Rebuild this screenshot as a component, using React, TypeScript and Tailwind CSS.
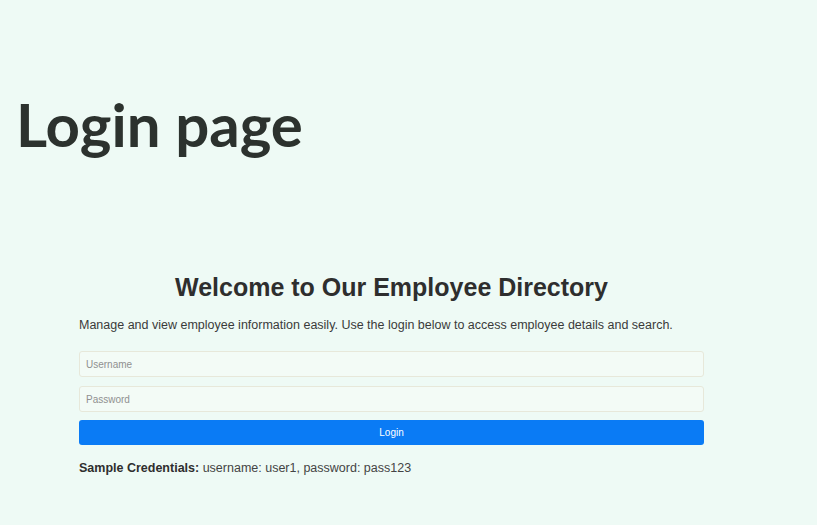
export default function App() {
  return (
    <div className="min-h-[525px] w-full bg-[#eefaf5] font-['Liberation_Sans',Arial,sans-serif] text-[#333]">
      {/* big caption */}
      <div className="pl-[16px] pt-[88px]">
        <h1 className="font-['Lato',sans-serif] text-[60px] font-bold leading-[72px] text-[#2c322e]">
          Login page
        </h1>
      </div>

      {/* login card */}
      <div className="ml-[79px] mt-[112px] w-[625px]">
        <h2 className="text-center text-[25px] font-bold leading-[30px] text-[#2e2e2e]">
          Welcome to Our Employee Directory
        </h2>
        <p className="mt-[15px] text-[12.5px] leading-[16px] text-[#3a3a3a]">
          Manage and view employee information easily. Use the login below to access employee details and search.
        </p>
        <div className="mt-[18px] flex flex-col gap-[9px]">
          <input
            type="text"
            placeholder="Username"
            className="h-[26px] w-full rounded-[3px] border border-[#e7e8da] bg-[#f3fbf6] px-[6px] text-[10px] placeholder:text-[#909090]"
          />
          <input
            type="password"
            placeholder="Password"
            className="h-[26px] w-full rounded-[3px] border border-[#e7e8da] bg-[#f3fbf6] px-[6px] text-[10px] placeholder:text-[#909090]"
          />
          <button className="-mt-[1px] h-[25px] w-full rounded-[3px] bg-[#0a7bf5] text-[10px] text-white">
            Login
          </button>
        </div>
        <p className="mt-[15px] text-[12.5px] leading-[16px] text-[#444]">
          <span className="font-bold text-[#2e2e2e]">Sample Credentials:</span> username: user1, password: pass123
        </p>
      </div>
    </div>
  );
}
